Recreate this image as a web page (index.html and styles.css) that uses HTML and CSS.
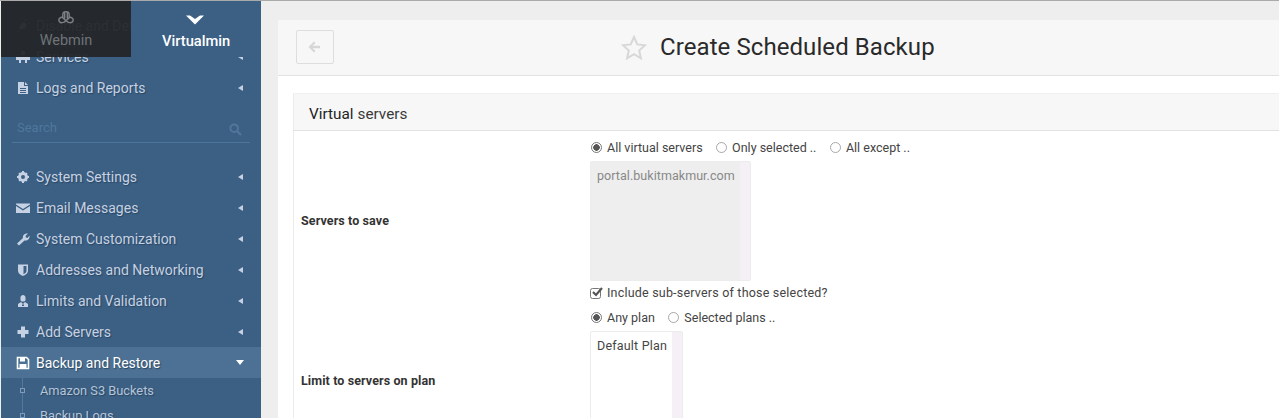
FILE: index.html
```html
<!DOCTYPE html>
<html lang="en">
<head>
<meta charset="utf-8">
<title>Create Scheduled Backup</title>
<link rel="stylesheet" href="styles.css">
</head>
<body>
<div class="page">
  <aside class="sidebar">
    <div class="switch">
      <div class="tab tab-webmin">
        <svg class="tab-logo" viewBox="0 0 20 20" width="20" height="18"><path d="M7 3c1-1.500 5-1.500 6 0 1 1.500.5 4 .5 5.500 2-1 4.500.5 4.500 2.500s-2 3.500-4 3c-1.500 0-2.500-.5-4-2-1.500 1.500-2.500 2-4 2-2 .5-4-1-4-3s2.500-3.500 4.500-2.500C6.500 7 6 4.500 7 3zM8.500 3v6.500M11.500 3v6.500M6.500 8.500 10 12l3.500-3.500" fill="none" stroke="#7d8186" stroke-width="1.600" stroke-linejoin="round"/></svg>
        <span>Webmin</span>
      </div>
      <div class="tab tab-virtualmin">
        <svg class="tab-chevron" viewBox="0 0 18 10" width="18" height="10"><path d="M0 .5 4 .5 9 4 14 .5 18 .5 9 9.500z" fill="#fff"/></svg>
        <span>Virtualmin</span>
      </div>
    </div>
    <ul class="menu">
      <li class="item"><svg class="ico" viewBox="0 0 14 14"><path d="M1 13l3-3-1-1 2-4 3-2 3 3-2 3-4 2-1-1-2 3zM8 1l2-1 1 2zM12 4l2-1-1 2z" fill="#c6d1e3"/></svg><span class="label">Disable and Delete</span><i class="caret"></i></li>
      <li class="item"><svg class="ico" viewBox="0 0 14 14"><path d="M5 1h4v4H5zM0 7h14v3h-3v3H9v-3H5v3H3v-3H0z" fill="#c6d1e3"/></svg><span class="label">Services</span><i class="caret"></i></li>
      <li class="item"><svg class="ico" viewBox="0 0 14 14"><path d="M2 1h6v4h4v8H2zM9 1l3 3H9zM4 7v1h6V7zM4 9v1h6V9zM4 11v1h6v-1z" fill="#c6d1e3" fill-rule="evenodd"/></svg><span class="label">Logs and Reports</span><i class="caret"></i></li>
      <li class="search"><span class="search-text">Search</span><svg class="search-ico" viewBox="0 0 13 13" width="13" height="13"><circle cx="5.200" cy="5.200" r="3.800" fill="none" stroke="#50779b" stroke-width="2"/><path d="M8 8l4 4" stroke="#50779b" stroke-width="2.400"/></svg></li>
      <li class="item"><svg class="ico" viewBox="0 0 14 14"><circle cx="7" cy="7" r="3.500" fill="none" stroke="#c6d1e3" stroke-width="3"/><path d="M6 1h2v2H6zM6 11h2v2H6zM1 6h2v2H1zM11 6h2v2h-2zM2.500 3.500l1-1 1.500 1.500-1 1zM10.500 2.500l1 1L10 5 9 4zM2.500 10.500l1 1L5 10 4 9zM11.500 10.500l-1 1L9 10l1-1z" fill="#c6d1e3"/></svg><span class="label">System Settings</span><i class="caret"></i></li>
      <li class="item"><svg class="ico" viewBox="0 0 14 14"><path d="M0 2.500h14v1L7 8 0 3.500zM0 5l7 4.500L14 5v7H0z" fill="#c6d1e3"/></svg><span class="label">Email Messages</span><i class="caret"></i></li>
      <li class="item"><svg class="ico" viewBox="0 0 14 14"><path d="M1 11.500 7 6c-.6-2.500 1.500-5 5-4.500L9.500 4l.5 1.500 1.500.5L13.500 3.500c.5 3.500-2 5.500-5 5l-5.500 5z" fill="#c6d1e3"/></svg><span class="label">System Customization</span><i class="caret"></i></li>
      <li class="item"><svg class="ico" viewBox="0 0 14 14"><path d="M2 1.500h10v6c0 3-2.500 4.500-5 5.500-2.500-1-5-2.500-5-5.500zM7.500 3v8.300c1.800-.8 3-2 3-3.800V3z" fill="#c6d1e3" fill-rule="evenodd"/></svg><span class="label">Addresses and Networking</span><i class="caret"></i></li>
      <li class="item"><svg class="ico" viewBox="0 0 14 14"><path d="M4.500 3.500c0-3.500 5-3.500 5 0V6c0 2-5 2-5 0zM2 13v-3l3-2 2 2 2-2 3 2v3zM6 10.500h2V12H6z" fill="#c6d1e3" fill-rule="evenodd"/></svg><span class="label">Limits and Validation</span><i class="caret"></i></li>
      <li class="item"><svg class="ico" viewBox="0 0 14 14"><path d="M5 1.500h4V5h3.500v4H9v3.500H5V9H1.500V5H5z" fill="#c6d1e3"/></svg><span class="label">Add Servers</span><i class="caret"></i></li>
      <li class="item item-active"><svg class="ico" viewBox="0 0 14 14"><path d="M1.500 1.500h9l2 2v9h-11z" fill="none" stroke="#fff" stroke-width="1.600"/><path d="M4 2h5v3.500H4zM3.500 8h7v4.500h-7z" fill="#fff"/></svg><span class="label">Backup and Restore</span><i class="caret caret-down"></i></li>
      <li class="sub"><i class="node"></i><span>Amazon S3 Buckets</span></li>
      <li class="sub"><i class="node"></i><span>Backup Logs</span></li>
    </ul>
  </aside>
  <main class="main">
    <div class="panel">
      <header class="panel-head">
        <button class="back" type="button" aria-label="Back"><svg viewBox="0 0 13 12" width="13" height="12"><path d="M6 .5 7.500 2 4.500 4.700H12v2.600H4.500L7.500 10 6 11.500.5 6z" fill="#d6d6d6"/></svg></button>
        <div class="title">
          <svg class="star" viewBox="0 0 26 25" width="26" height="25"><path d="M13 2l3.300 7.400 7.700.8-5.800 5.300 1.700 7.800L13 19.200 6.100 23.300l1.700-7.800L2 10.200l7.700-.8z" fill="none" stroke="#d8d8d8" stroke-width="2"/></svg>
          <h1>Create Scheduled Backup</h1>
        </div>
      </header>
      <section class="box">
        <h2 class="box-head"><b>Virtual</b> servers</h2>
        <div class="row row-servers">
          <div class="row-label">Servers to save</div>
          <div class="row-value">
            <div class="choices">
              <label class="choice"><i class="radio on"></i>All virtual servers</label>
              <label class="choice"><i class="radio"></i>Only selected ..</label>
              <label class="choice"><i class="radio"></i>All except ..</label>
            </div>
            <div class="listbox listbox-disabled"><div class="list-text">portal.bukitmakmur.com</div><div class="scroll"></div></div>
            <label class="check-line"><svg class="check" viewBox="0 0 13 13" width="13" height="13"><rect x=".5" y="2.500" width="10" height="10" rx="2" fill="none" stroke="#777"/><path d="M3 6l3 3 6-7" fill="none" stroke="#555" stroke-width="2.200"/></svg>Include sub-servers of those selected?</label>
          </div>
        </div>
        <div class="row row-plan">
          <div class="row-label">Limit to servers on plan</div>
          <div class="row-value">
            <div class="choices">
              <label class="choice"><i class="radio on"></i>Any plan</label>
              <label class="choice"><i class="radio"></i>Selected plans ..</label>
            </div>
            <div class="listbox listbox-plan"><div class="list-text">Default Plan</div><div class="scroll"></div></div>
          </div>
        </div>
      </section>
    </div>
  </main>
</div>
</body>
</html>
```
FILE: styles.css
```css
* { box-sizing: border-box; }
html, body { margin: 0; height: 100%; overflow: hidden; }
body { font-family: Roboto, "Liberation Sans", sans-serif; background: #eeeeee; color: #333; }
.page { display: flex; height: 418px; border-top: 1px solid #aaa; overflow: hidden; }

.sidebar { position: relative; flex: 0 0 261px; padding-left: 1px; background: #3b6084; background-clip: content-box; overflow: hidden; }
.switch { position: absolute; top: 0; left: 1px; right: 0; height: 56px; display: flex; z-index: 2; }
.tab { height: 56px; display: flex; flex-direction: column; align-items: center; }
.tab-webmin { width: 130px; background: rgba(36, 38, 41, .95); color: #6f7377; padding-top: 9px; font-size: 14.500px; }
.tab-webmin span { margin-top: 4px; }
.tab-virtualmin { flex: 1; align-items: flex-start; padding-left: 31px; background: #3b6084; color: #fff; font-weight: 500; padding-top: 14px; font-size: 14.700px; }
.tab-virtualmin span { margin-top: 7px; }
.tab-logo, .tab-chevron { display: block; }
.tab-chevron { margin-left: 24px; }

.menu { list-style: none; margin: 0; padding: 9px 0 0; }
.item { height: 31px; display: flex; align-items: center; padding: 0 19px 0 15px; color: #c6d1e3; font-size: 14px; text-shadow: 1px 1px 1px #2a4763; }
.item-active { background: #4d7194; color: #fff; }
.ico { width: 14px; height: 14px; flex: none; margin-right: 6px; }
.label { flex: 1; }
.caret { width: 0; height: 0; border: 3.500px solid transparent; border-right: 5px solid #c6d1e3; border-left: 0; margin-right: -1px; }
.caret-down { border: 4px solid transparent; border-top: 5px solid #fff; border-bottom: 0; margin-right: -2px; }

.search { height: 58px; margin: 0 11px; padding: 17px 8px 0 5px; display: flex; align-items: flex-start; justify-content: space-between; font-size: 13px; color: #50779b; position: relative; }
.search::after { content: ""; position: absolute; left: 0; right: 0; top: 39px; border-bottom: 1px solid #4d749a; }
.search-ico { flex: none; margin-top: 3px; }

.sub { position: relative; height: 25px; display: flex; align-items: center; padding-left: 39px; color: #b5c4d9; font-size: 12.800px; text-shadow: 1px 1px 1px #2a4763; }
.sub::before { content: ""; position: absolute; left: 21px; top: 0; bottom: 0; border-left: 1px solid #54789c; }
.node { position: absolute; left: 19px; top: 10px; width: 5px; height: 5px; border: 1px solid #7f9abb; background: #3b6084; }

.main { flex: 1; min-width: 0; padding: 19px 0 0 17px; }
.panel { background: #fff; height: 500px; }
.panel-head { height: 56px; background: #f7f7f7; border-bottom: 1px solid #e2e2e2; display: flex; align-items: center; padding: 0 18px 1px; }
.back { width: 38px; height: 34px; padding: 0 1px 0 0; background: transparent; border: 1px solid #dedede; border-radius: 2px; display: flex; align-items: center; justify-content: center; }
.title { flex: 1; display: flex; align-items: center; gap: 13px; margin-left: 287px; }
.star { flex: none; }
h1 { margin: 0; font-size: 24px; font-weight: 400; color: #2a2a2a; letter-spacing: .08px; }

.box { margin: 17px 0 0 15px; }
.box-head { margin: 0; height: 38px; background: #f7f7f7; border: 1px solid #ececec; border-top-color: #f3f0f3; border-right: 0; border-bottom-color: #e2e2e2; padding: 3px 15px 0; display: flex; align-items: center; gap: 4px; font-size: 15.300px; font-weight: 400; color: #3a3a3a; }
.box-head b { font-weight: 400; color: #222; }
.row { display: flex; border-left: 1px solid #ececec; }
.row-servers { height: 173px; padding-top: 4px; }
.row-plan { height: 152px; }
.row-label { flex: 0 0 296px; display: flex; align-items: center; padding: 2px 0 0 7px; font-size: 12.500px; letter-spacing: .1px; font-weight: 700; color: #333; }
.row-plan .row-label { padding-top: 0; }
.row-value { flex: 1; font-size: 12.500px; color: #444; }
.choices { display: flex; gap: 12.500px; height: 24px; align-items: center; }
.row-plan .choices { height: 26px; }
.choice { display: flex; align-items: center; }
.radio { width: 11px; height: 11px; border: 1px solid #a8a8a8; border-radius: 50%; margin: 0 5px 0 1px; flex: none; background: #fff; }
.radio.on { border-color: #777; background: radial-gradient(circle, #555 0 3px, #fff 3.500px); }
.listbox { display: flex; background: #fff; border: 1px solid #ececec; border-radius: 2px; }
.listbox-disabled { width: 161px; height: 120px; background: #eeeeee; color: #888; margin-top: 2px; }
.listbox-disabled .list-text { letter-spacing: .05px; }
.listbox-plan { width: 93px; height: 140px; margin-top: 1px; }
.list-text { flex: 1; padding: 6px 0 0 6px; font-size: 12.500px; letter-spacing: .2px; white-space: nowrap; overflow: hidden; }
.scroll { width: 10px; background: #f5f0f5; flex: none; }
.check-line { display: flex; align-items: center; gap: 4px; height: 22px; letter-spacing: .2px; }
.check { flex: none; }
```
